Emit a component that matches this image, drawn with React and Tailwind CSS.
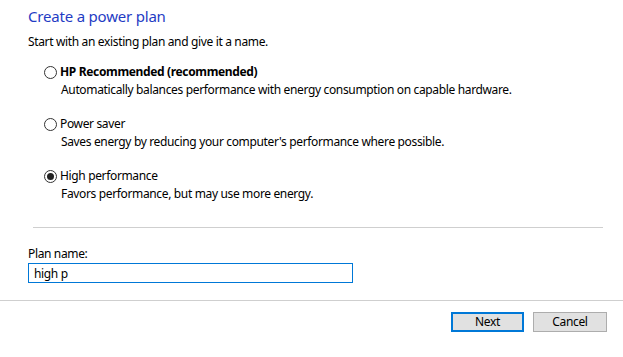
import { useState } from "react";

const plans = [
  {
    id: "hp",
    label: "HP Recommended (recommended)",
    bold: true,
    desc: "Automatically balances performance with energy consumption on capable hardware.",
  },
  {
    id: "saver",
    label: "Power saver",
    desc: "Saves energy by reducing your computer's performance where possible.",
  },
  {
    id: "high",
    label: "High performance",
    desc: "Favors performance, but may use more energy.",
  },
];

const Radio = ({ checked }) => (
  <span className="w-[13px] h-[13px] rounded-full border border-[#333] bg-white flex items-center justify-center shrink-0">
    {checked && <span className="w-[7px] h-[7px] rounded-full bg-[#222]" />}
  </span>
);

const App = () => {
  const [selected, setSelected] = useState("high");
  const [name, setName] = useState("high p");

  return (
    <div className="w-[623px] h-[357px] bg-white text-black font-['Noto_Sans',sans-serif] text-[12px] tracking-[-0.35px] flex flex-col">
      <div className="px-[28px] pt-[5px]">
        <h1 className="text-[15px] leading-[22px] text-[#1f3cc4] tracking-[-0.2px]">Create a power plan</h1>
        <p className="mt-[7px] leading-[16px]">Start with an existing plan and give it a name.</p>
      </div>

      {/* Plan choices */}
      <div className="pl-[44px] pt-[14px] flex flex-col gap-[18px]">
        {plans.map((p) => (
          <div key={p.id} className="flex flex-col cursor-default" onClick={() => setSelected(p.id)}>
            <div className="flex items-center gap-[3px] h-[16px]">
              <Radio checked={selected === p.id} />
              <span className={p.bold ? "font-bold" : ""}>{p.label}</span>
            </div>
            <div className="pl-[17px] mt-[2px] leading-[16px]">{p.desc}</div>
          </div>
        ))}
      </div>

      <div className="ml-[33px] mr-[20px] mt-[25px] border-t border-[#cfcfcf]" />

      <div className="px-[28px] pt-[18px]">
        <div className="leading-[16px]">Plan name:</div>
        <input
          value={name}
          onChange={(e) => setName(e.target.value)}
          className="mt-[1px] w-[325px] h-[20px] border border-[#0078d7] px-[5px] text-[12px] leading-[16px] tracking-[-0.35px] outline-none"
        />
      </div>

      <div className="mt-[17px] border-t border-[#cfcfcf]" />

      <div className="flex justify-end gap-[9px] pr-[16px] pt-[11px]">
        <button className="w-[73px] h-[20px] bg-[#e1e1e1] border-2 border-[#0078d7] leading-none">Next</button>
        <button className="w-[74px] h-[20px] bg-[#e1e1e1] border border-[#adadad] leading-none">Cancel</button>
      </div>
    </div>
  );
};

export default App;
